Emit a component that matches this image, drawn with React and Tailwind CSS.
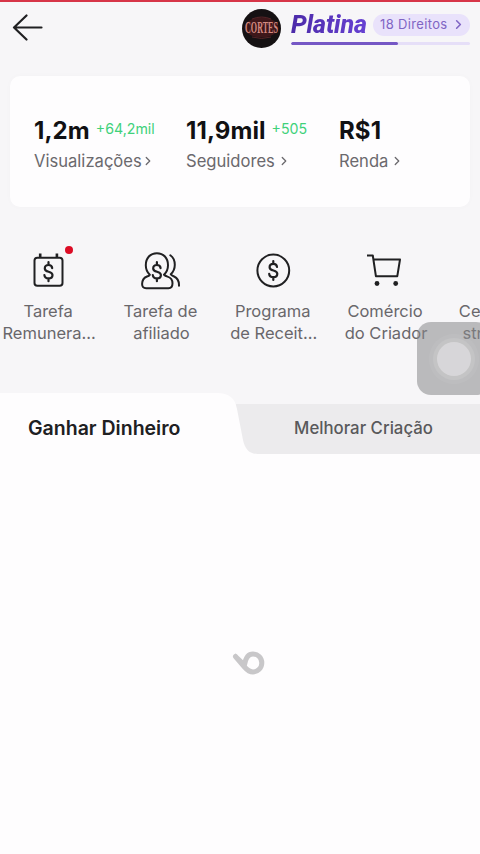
import { ChevronRight } from "lucide-react";

const stats = [
  { value: "1,2m", delta: "+64,2mil", label: "Visualizações", width: "w-[152px]", arrow: "-ml-[1px]" },
  { value: "11,9mil", delta: "+505", label: "Seguidores", width: "w-[153px]", arrow: "ml-[2px]" },
  { value: "R$1", delta: "", label: "Renda", width: "w-[100px]", arrow: "ml-[2px]" },
];

function Dollar() {
  return (
    <path d="M23.800 18c-.2-2-1.500-3.200-3.700-3.200s-3.700 1.300-3.700 3.400c0 4.600 7.700 2 7.700 6.600 0 2.100-1.500 3.400-4 3.400-2.300 0-3.900-1.200-4.100-3.400M20.100 12v2.800M20.100 28.200V31" strokeWidth="2.200" />
  );
}

function TaskIcon() {
  return (
    <svg className="h-10 w-10" viewBox="0 0 40 40" fill="none" stroke="#202022" strokeWidth="2" strokeLinecap="round">
      <rect x="6.500" y="7.800" width="28" height="28" rx="2.800" />
      <path d="M12.200 3.500v3.700M28.900 3.500v3.700" strokeWidth="2.600" strokeLinecap="butt" />
      <g transform="translate(.4 .2)"><Dollar /></g>
    </svg>
  );
}

function AffiliateIcon() {
  return (
    <svg className="h-10 w-10" viewBox="0 0 40 40" fill="none" stroke="#202022" strokeWidth="2" strokeLinecap="round" strokeLinejoin="round">
      <path d="M9.800 24.800C7.300 22.300 5.800 19 5.800 15.200 5.800 8 10.300 3.200 16.900 3.200S28 8 28 15.200c0 3.800-1.500 7.100-4 9.600 1 .9 2.200 1.400 3.500 1.800 3.300 1 5 3.500 5 6.700 0 3.200-1.300 4.900-4 4.900H6.100c-2.700 0-4-1.500-4-4.100 0-4.100 1.900-6.400 4.900-7.600 1.200-.4 2.100-.8 2.800-1.700" />
      <path d="M30.300 5.200c2.900 2 4.500 5.300 4.500 9.600 0 4.100-1.500 7.100-4 9.500 0 0 1 1.200 3.300 2.200 3.400 1.500 5 4.900 4.900 9.300" />
      <g transform="translate(-3.200 .2)"><Dollar /></g>
    </svg>
  );
}

function ProgramIcon() {
  return (
    <svg className="h-10 w-10" viewBox="0 0 40 40" fill="none" stroke="#202022" strokeWidth="2" strokeLinecap="round">
      <circle cx="20.300" cy="20.500" r="15.900" />
      <g transform="translate(.2 -1)"><Dollar /></g>
    </svg>
  );
}

function CartIcon() {
  return (
    <svg className="h-10 w-10" viewBox="0 0 40 40" fill="none" stroke="#202022" strokeWidth="2" strokeLinejoin="round">
      <path d="M2 5.500h5.800l3.100 20.700h21.400L35 9.500H8.400" />
      <circle cx="12" cy="33.500" r="2.400" fill="#202022" stroke="none" />
      <circle cx="30.700" cy="33.500" r="2.400" fill="#202022" stroke="none" />
    </svg>
  );
}

const tasks = [
  { lines: ["Tarefa", "Remunera..."], icon: <TaskIcon />, dot: true },
  { lines: ["Tarefa de", "afiliado"], icon: <AffiliateIcon /> },
  { lines: ["Programa", "de Receit..."], icon: <ProgramIcon /> },
  { lines: ["Comércio", "do Criador"], icon: <CartIcon /> },
  { lines: ["Centro de", "streami..."] },
];

function Header() {
  return (
    <header className="flex h-[74px] items-start justify-between border-t-2 border-[#d73548] pl-3 pr-[10px]">
      <svg className="mt-[11px] h-7 w-8" viewBox="0 0 32 28" fill="none" stroke="#202022" strokeWidth="2.200" strokeLinecap="round" strokeLinejoin="round">
        <path d="M14.500 2.500 2 14.500l12.500 12M2 14.500h27.500" />
      </svg>
      <div className="flex">
        <svg className="mt-[7px] h-[39px] w-[39px]" viewBox="0 0 39 39">
          <circle cx="19.500" cy="19.500" r="19.500" fill="#151113" />
          <ellipse cx="19.500" cy="18.500" rx="17" ry="10" fill="#3e171a" />
          <path d="M10 10q9.500-4 19 0M10 28q9.500 3 19 0" fill="none" stroke="#552427" />
          <text x="19.500" y="24" textAnchor="middle" textLength="33" lengthAdjust="spacingAndGlyphs" fontFamily="Liberation Serif, serif" fontWeight="bold" fontSize="17" fill="#d38a80">CORTES</text>
        </svg>
        <div className="ml-[10px] w-[179px]">
          <div className="mt-[7px] flex h-[31px] items-center justify-between">
            <span className="-mr-2 whitespace-nowrap bg-gradient-to-r from-[#4c2aa9] to-[#6842d5] bg-clip-text pr-1 font-['Roboto'] text-[25px] font-extrabold italic leading-[31px] tracking-[-.1px] text-transparent">Platina</span>
            <span className="flex h-[22px] w-[97px] items-center justify-between rounded-full bg-[#e9e2fb] pl-[7px] pr-1 text-[13px] tracking-[.35px] text-[#8065c4]">
              <span className="whitespace-nowrap">18 Direitos</span>
              <ChevronRight className="h-[15px] w-[15px] shrink-0" strokeWidth={2.500} />
            </span>
          </div>
          <div className="mt-[2px] h-[2.500px] overflow-hidden rounded-full bg-[#e6dff8]">
            <div className="h-full w-[107px] rounded-full bg-[#7557c5]" />
          </div>
        </div>
      </div>
    </header>
  );
}

function Tabs() {
  return (
    <div className="flex h-[61px]">
      <button className="w-[210px] bg-[#fefdfe] pl-[28px] pt-[11px] text-left text-[19.500px] font-semibold text-[#202022]">Ganhar Dinheiro</button>
      <svg className="h-[61px] w-[50px] shrink-0" viewBox="0 0 50 61">
        <path d="M26 11h24v50H24z" fill="#ecebed" />
        <path d="M0 0h7c12 0 18 5 20 16l6 31c2 9 6 14 15 14H0z" fill="#fefdfe" />
      </svg>
      <button className="mt-[11px] h-[50px] flex-1 whitespace-nowrap bg-[#ecebed] pr-[13px] text-[16.800px] font-medium text-[#59595b]">Melhorar Criação</button>
    </div>
  );
}

export default function App() {
  return (
    <div className="relative h-[854px] w-[480px] overflow-hidden bg-[#f7f6f8] font-['Inter',sans-serif]">
      <Header />
      <section className="mx-[10px] mt-[2px] flex h-[131px] rounded-[10px] bg-[#fefdfe] pl-6 pt-[39px] shadow-[0_0_6px_rgba(0,0,0,.02)]">
        {stats.map((s) => (
          <div key={s.label} className={s.width}>
            <div className="flex h-[31px] items-center whitespace-nowrap">
              <span className="text-[24px] font-bold tracking-[.1px] text-[#111113]">{s.value}</span>
              <span className="-mt-[3px] ml-[6px] text-[14.200px] text-[#40d17a]">{s.delta}</span>
            </div>
            <div className="flex h-[30px] items-center text-[16.600px] text-[#6b696d]">
              {s.label}
              <ChevronRight className={`${s.arrow} h-[14px] w-[14px]`} strokeWidth={2.200} />
            </div>
          </div>
        ))}
      </section>
      <nav className="-ml-2 mt-[43px] flex h-[143px]">
        {tasks.map((t) => (
          <div key={t.lines[0]} className="flex w-[112.300px] shrink-0 flex-col items-center text-center text-[16.500px] leading-[22px] text-[#69676b]">
            <div className="relative mb-[10px] h-10 w-10">
              {t.icon}
              {t.dot && <span className="absolute -right-[5px] -top-[4px] h-[8px] w-[8px] rounded-full bg-[#dc0c25]" />}
            </div>
            <span className="whitespace-nowrap">{t.lines[0]}</span>
            <span className="ml-[2px] whitespace-nowrap">{t.lines[1]}</span>
          </div>
        ))}
      </nav>
      <Tabs />
      <main className="flex h-[400px] justify-center bg-[#fefdfe] pt-[196px]">
        <svg className="ml-[18px] h-[26px] w-[34px]" viewBox="0 0 34 26" fill="none" stroke="#c8c7c9" strokeWidth="5" strokeLinecap="round" strokeLinejoin="round">
          <path d="m3.500 6.500 9 8.500C13.500 8 16.500 4 21 4c4.800 0 8.800 4 8.800 8.900S25.800 22 21 22c-3.500 0-5.500-1.500-8.500-5l-9-10.500" />
        </svg>
      </main>
      <div className="absolute left-[417px] top-[322px] grid h-[73px] w-[73px] place-items-center rounded-[14px] bg-[#89898b]/55">
        <div className="grid h-[50px] w-[50px] place-items-center rounded-full bg-white/5">
          <div className="grid h-[42px] w-[42px] place-items-center rounded-full bg-white/10">
            <div className="h-[34px] w-[34px] rounded-full bg-[#dcdbdd]/80" />
          </div>
        </div>
      </div>
    </div>
  );
}
